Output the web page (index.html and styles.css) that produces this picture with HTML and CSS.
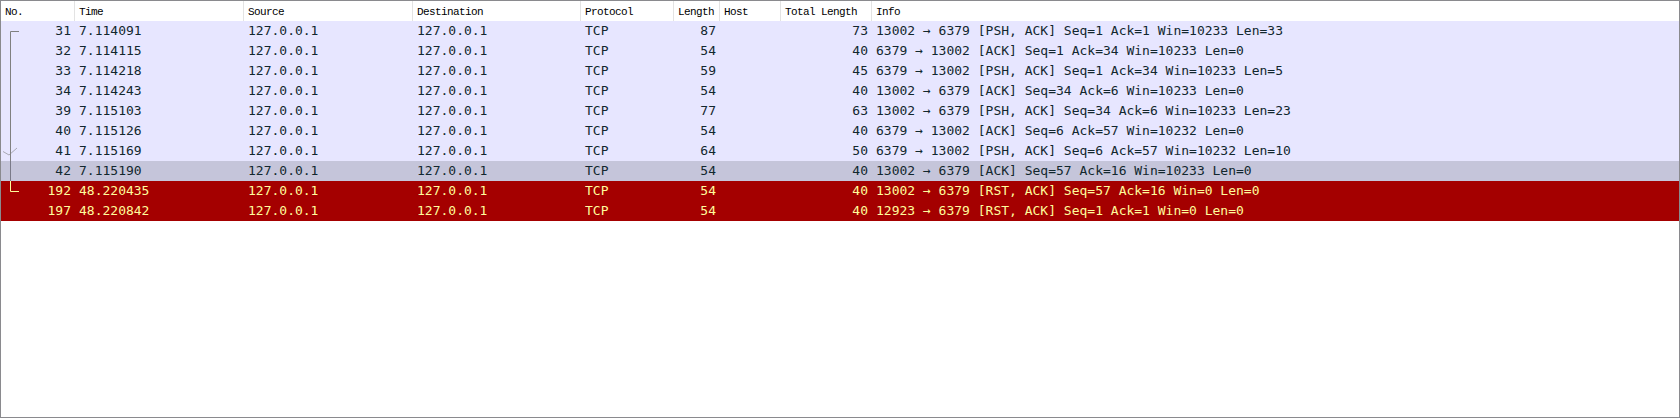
FILE: index.html
```html
<!DOCTYPE html>
<html>
<head>
<meta charset="utf-8">
<link rel="stylesheet" href="styles.css">
</head>
<body>
<div class="pane">
  <div class="row head">
    <div class="hc">No.</div>
    <div class="hc sep">Time</div>
    <div class="hc sep">Source</div>
    <div class="hc sep">Destination</div>
    <div class="hc sep">Protocol</div>
    <div class="hc sep">Length</div>
    <div class="hc sep">Host</div>
    <div class="hc sep">Total Length</div>
    <div class="hc sep">Info</div>
  </div>

  <div class="row tcp">
    <div class="c num tree"><svg class="tr" width="20" height="20"><path d="M9.5 10.5H18M9.5 10.5V20" /></svg>31</div>
    <div class="c">7.114091</div><div class="c">127.0.0.1</div><div class="c">127.0.0.1</div><div class="c">TCP</div>
    <div class="c num">87</div><div class="c"></div><div class="c num">73</div>
    <div class="c">13002 → 6379 [PSH, ACK] Seq=1 Ack=1 Win=10233 Len=33</div>
  </div>
  <div class="row tcp">
    <div class="c num tree"><svg class="tr" width="20" height="20"><path d="M9.5 0V20" /></svg>32</div>
    <div class="c">7.114115</div><div class="c">127.0.0.1</div><div class="c">127.0.0.1</div><div class="c">TCP</div>
    <div class="c num">54</div><div class="c"></div><div class="c num">40</div>
    <div class="c">6379 → 13002 [ACK] Seq=1 Ack=34 Win=10233 Len=0</div>
  </div>
  <div class="row tcp">
    <div class="c num tree"><svg class="tr" width="20" height="20"><path d="M9.5 0V20" /></svg>33</div>
    <div class="c">7.114218</div><div class="c">127.0.0.1</div><div class="c">127.0.0.1</div><div class="c">TCP</div>
    <div class="c num">59</div><div class="c"></div><div class="c num">45</div>
    <div class="c">6379 → 13002 [PSH, ACK] Seq=1 Ack=34 Win=10233 Len=5</div>
  </div>
  <div class="row tcp">
    <div class="c num tree"><svg class="tr" width="20" height="20"><path d="M9.5 0V20" /></svg>34</div>
    <div class="c">7.114243</div><div class="c">127.0.0.1</div><div class="c">127.0.0.1</div><div class="c">TCP</div>
    <div class="c num">54</div><div class="c"></div><div class="c num">40</div>
    <div class="c">13002 → 6379 [ACK] Seq=34 Ack=6 Win=10233 Len=0</div>
  </div>
  <div class="row tcp">
    <div class="c num tree"><svg class="tr" width="20" height="20"><path d="M9.5 0V20" /></svg>39</div>
    <div class="c">7.115103</div><div class="c">127.0.0.1</div><div class="c">127.0.0.1</div><div class="c">TCP</div>
    <div class="c num">77</div><div class="c"></div><div class="c num">63</div>
    <div class="c">13002 → 6379 [PSH, ACK] Seq=34 Ack=6 Win=10233 Len=23</div>
  </div>
  <div class="row tcp">
    <div class="c num tree"><svg class="tr" width="20" height="20"><path d="M9.5 0V20" /></svg>40</div>
    <div class="c">7.115126</div><div class="c">127.0.0.1</div><div class="c">127.0.0.1</div><div class="c">TCP</div>
    <div class="c num">54</div><div class="c"></div><div class="c num">40</div>
    <div class="c">6379 → 13002 [ACK] Seq=6 Ack=57 Win=10232 Len=0</div>
  </div>
  <div class="row tcp">
    <div class="c num tree"><svg class="tr" width="20" height="20"><path class="tick" d="M2 10.5L8 14L16 7" /><path d="M9.5 0V20" /></svg>41</div>
    <div class="c">7.115169</div><div class="c">127.0.0.1</div><div class="c">127.0.0.1</div><div class="c">TCP</div>
    <div class="c num">64</div><div class="c"></div><div class="c num">50</div>
    <div class="c">6379 → 13002 [PSH, ACK] Seq=6 Ack=57 Win=10232 Len=10</div>
  </div>
  <div class="row sel">
    <div class="c num tree"><svg class="tr" width="20" height="20"><path d="M9.5 0V20" /></svg>42</div>
    <div class="c">7.115190</div><div class="c">127.0.0.1</div><div class="c">127.0.0.1</div><div class="c">TCP</div>
    <div class="c num">54</div><div class="c"></div><div class="c num">40</div>
    <div class="c">13002 → 6379 [ACK] Seq=57 Ack=16 Win=10233 Len=0</div>
  </div>
  <div class="row rst">
    <div class="c num tree"><svg class="tr" width="20" height="20"><path d="M9.5 0V10.5H18" /></svg>192</div>
    <div class="c">48.220435</div><div class="c">127.0.0.1</div><div class="c">127.0.0.1</div><div class="c">TCP</div>
    <div class="c num">54</div><div class="c"></div><div class="c num">40</div>
    <div class="c">13002 → 6379 [RST, ACK] Seq=57 Ack=16 Win=0 Len=0</div>
  </div>
  <div class="row rst">
    <div class="c num">197</div>
    <div class="c">48.220842</div><div class="c">127.0.0.1</div><div class="c">127.0.0.1</div><div class="c">TCP</div>
    <div class="c num">54</div><div class="c"></div><div class="c num">40</div>
    <div class="c">12923 → 6379 [RST, ACK] Seq=1 Ack=1 Win=0 Len=0</div>
  </div>
</div>
</body>
</html>
```

FILE: styles.css
```css
html, body {
  margin: 0;
  padding: 0;
  background: #ffffff;
}

.pane {
  box-sizing: border-box;
  width: 1680px;
  height: 418px;
  border: 1px solid #8a8a8e;
  background: #ffffff;
  overflow: hidden;
}

.row {
  display: grid;
  grid-template-columns: 73px 169px 169px 168px 93px 46px 61px 91px 1fr;
  height: 20px;
}

.head {
  background: #ffffff;
  color: #000000;
  font-family: "Liberation Mono", monospace;
  font-size: 11px;
  letter-spacing: -0.6px;
}

.hc {
  box-sizing: border-box;
  padding-left: 4px;
  line-height: 22px;
  white-space: pre;
  overflow: hidden;
}

.hc:first-child {
  padding-left: 4px;
}

.sep {
  border-left: 1px solid #e3e3e3;
}

.c {
  box-sizing: border-box;
  padding-left: 5px;
  font-family: "DejaVu Sans Mono", monospace;
  font-size: 13px;
  line-height: 20px;
  white-space: pre;
  overflow: hidden;
}

.num {
  text-align: right;
  padding-left: 0;
  padding-right: 3px;
}

.tree {
  position: relative;
}

.tr {
  position: absolute;
  left: 0;
  top: 0;
  fill: none;
  stroke: #808080;
  stroke-width: 1;
}

.tick {
  stroke: #a9a9b4;
}

.tcp {
  background: #e7e6ff;
  color: #12272e;
}

.sel {
  background: #c5c5da;
  color: #12272e;
}

.rst {
  background: #a40000;
  color: #fffc9c;
}

.rst .tr {
  stroke: #fffc9c;
}

.sel .tr {
  stroke: #7a7a88;
}
```
